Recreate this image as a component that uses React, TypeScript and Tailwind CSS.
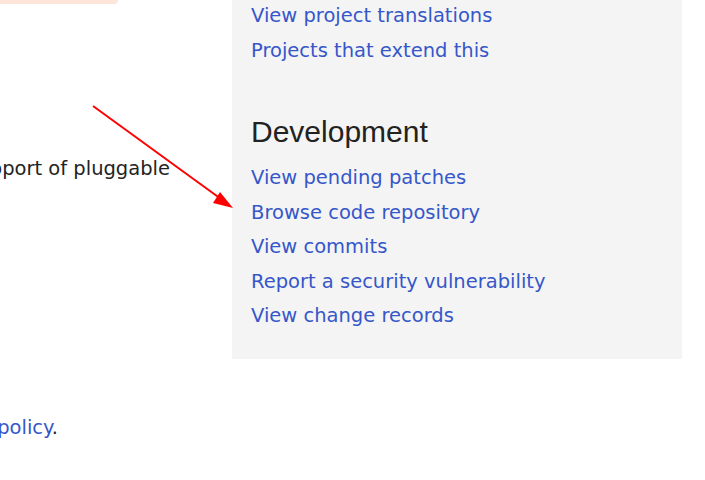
const topLinks = ['View project translations', 'Projects that extend this'];

const devLinks = [
  'View pending patches',
  'Browse code repository',
  'View commits',
  'Report a security vulnerability',
  'View change records',
];

function LinkList({ items, className }: { items: string[]; className?: string }) {
  return (
    <ul className={className}>
      {items.map((label) => (
        <li key={label} className="leading-[34.56px]">
          <a href="#" className="text-[#3657c9] no-underline">
            {label}
          </a>
        </li>
      ))}
    </ul>
  );
}

export default function App() {
  return (
    <div className="relative h-[480px] w-[705px] overflow-hidden bg-white font-['DejaVu_Sans',sans-serif] text-[19.5px] text-[#232323]">
      <div className="flex">
        {/* Main column (scrolled, cut at the left edge) */}
        <div className="w-[232px] shrink-0">
          <div className="h-[4px] w-[118px] rounded-br-[6px] bg-[#fde5d9]" />
          <div className="mt-[151px] flex w-[170px] justify-end leading-[28px]">
            <p className="whitespace-nowrap">Drupal with support of pluggable</p>
          </div>
          <div className="mt-[231px] flex w-[58px] justify-end leading-[28px]">
            <p className="whitespace-nowrap">
              <a href="#" className="text-[#3657c9]">privacy policy</a>.
            </p>
          </div>
        </div>

        {/* Sidebar */}
        <aside className="h-fit w-[450px] shrink-0 bg-[#f4f4f4] px-[19px] pb-[25px]">
          <LinkList items={topLinks} className="-mt-[1px]" />
          <h2 className="mt-[45.5px] font-['Liberation_Sans',Arial,sans-serif] text-[30px] leading-[36px] font-normal text-[#222]">
            Development
          </h2>
          <LinkList items={devLinks} className="mt-[11.4px]" />
        </aside>
      </div>

      {/* Annotation arrow */}
      <svg className="pointer-events-none absolute left-0 top-0" width="705" height="480">
        <line x1="93" y1="106" x2="221" y2="199" stroke="#ff0000" strokeWidth="2" />
        <polygon points="233,208 220,192 213,203" fill="#ff0000" />
      </svg>
    </div>
  );
}
